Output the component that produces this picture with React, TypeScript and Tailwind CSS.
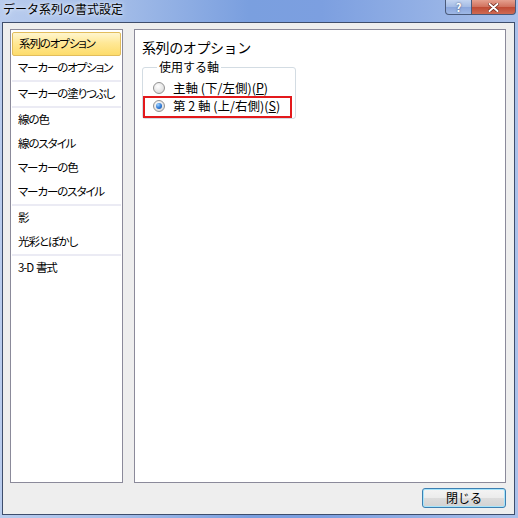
import React from "react";

const jp = "font-['Noto_Sans_CJK_JP','Noto_Sans',sans-serif]";

interface Item {
  label: string;
  selected?: boolean;
}

// groups are split by a thin band
const groups: Item[][] = [
  [{ label: "系列のオプション", selected: true }, { label: "マーカーのオプション" }],
  [{ label: "マーカーの塗りつぶし" }],
  [{ label: "線の色" }, { label: "線のスタイル" }, { label: "マーカーの色" }, { label: "マーカーのスタイル" }],
  [{ label: "影" }, { label: "光彩とぼかし" }],
  [{ label: "3-D\u00a0\u00a0書式" }],
];

function Radio({ checked }: { checked?: boolean }) {
  return (
    <span className="shrink-0 flex items-center justify-center w-[12px] h-[12px] rounded-full border border-[#929292] bg-[radial-gradient(circle_at_40%_35%,#ffffff_0%,#e4e4e4_60%,#cfcfcf_100%)]">
      {checked && (
        <span className="w-[6px] h-[6px] rounded-full bg-[radial-gradient(circle_at_35%_30%,#9fd3ff_0%,#2f79d6_55%,#164f9e_100%)]" />
      )}
    </span>
  );
}

export default function App() {
  return (
    <div
      className={`w-[518px] h-[518px] flex flex-col overflow-hidden bg-[linear-gradient(90deg,#b9ccee_0%,#a4bde8_22%,#7a9fdf_48%,#7c9fe0_62%,#97b3e6_85%,#aac1ea_100%)] ${jp}`}
    >
      {/* TITLE BAR */}
      <div className="h-[22px] flex items-start shrink-0">
        <div className="pl-[3px] pt-[1px] text-[12px] leading-[16px] text-black [text-shadow:0_0_6px_#e6eefb,0_0_3px_#e6eefb]">
          データ系列の書式設定
        </div>
        <div className="ml-auto mr-[2px] flex">
          <div className="w-[27px] h-[15px] rounded-bl-[4px] border border-t-0 border-[#4a5a7a] bg-[linear-gradient(180deg,#c3d4f1_0%,#a3bbe4_50%,#8aa6dc_51%,#9fb8e6_100%)] flex items-center justify-center text-white text-[11px] font-bold leading-[13px] [text-shadow:0_0_2px_#3a4a6a]">
            ?
          </div>
          <div className="w-[44px] h-[15px] rounded-br-[4px] border border-l-0 border-t-0 border-[#4a5a7a] bg-[linear-gradient(180deg,#e5a08f_0%,#d0705c_50%,#bf4a34_51%,#cf6a53_100%)] flex items-center justify-center">
            <svg width="11" height="9" viewBox="0 0 11 9">
              <path d="M1.5 1 L9.5 8 M9.5 1 L1.5 8" stroke="#6a2418" strokeWidth="3.4" strokeLinecap="round" />
              <path d="M1.5 1 L9.5 8 M9.5 1 L1.5 8" stroke="#ffffff" strokeWidth="2" strokeLinecap="round" />
            </svg>
          </div>
        </div>
      </div>

      {/* BODY */}
      <div className="flex-1 ml-[2px] mr-[3px] mb-[3px] border border-[#3e4d6c] bg-[#eeeeee] flex flex-col pt-[6px] pl-[7px] pr-[8px] pb-[5px]">
        <div className="h-[454px] flex gap-[11px]">
          {/* CATEGORY LIST */}
          <div className="w-[113px] bg-white border border-[#8b8a9a] pt-[2px] px-[1px]">
            {groups.map((g, gi) => (
              <div key={gi}>
                {gi > 0 && <div className="h-[2px] bg-[#ebebf4]" />}
                {g.map((it) => (
                  <div
                    key={it.label}
                    className={`h-[24px] flex items-center pl-[6px] text-[11.5px] tracking-[-1.1px] text-black whitespace-nowrap [font-feature-settings:'palt'] ${
                      it.selected
                        ? "rounded-[2px] border border-[#e2bd5c] bg-[linear-gradient(180deg,#fff6cf_0%,#ffe896_45%,#fddc6b_100%)]"
                        : ""
                    }`}
                  >
                    {it.label}
                  </div>
                ))}
              </div>
            ))}
          </div>

          {/* OPTIONS PANEL */}
          <div className="flex-1 bg-white border border-[#8b8a9a] pl-[7px] pt-[8px]">
            <div className="text-[14px] leading-[18px] text-black tracking-[-0.4px]">系列のオプション</div>

            <fieldset className="mt-[4px] w-[154px] border border-[#d3dce3] rounded-[3px] pl-[10px] pt-[5px] pb-[3px]">
              <legend className="ml-[4px] px-[2px] text-[12px] leading-[14px] text-black">使用する軸</legend>

              <div className="h-[18px] flex items-center gap-[8px] text-[12.5px] leading-[18px] text-black whitespace-nowrap">
                <Radio />
                <span>
                  主軸 (下/左側)(<span className="underline">P</span>)
                </span>
              </div>
              <div className="relative h-[18px] flex items-center gap-[8px] text-[12.5px] leading-[18px] text-black whitespace-nowrap">
                <Radio checked />
                <span>
                  第 2 軸 (上/右側)(<span className="underline">S</span>)
                </span>
                {/* red highlight */}
                <div className="absolute left-[-10px] top-[-1px] w-[149px] h-[22px] border-2 border-[#e3191c] pointer-events-none" />
              </div>
            </fieldset>
          </div>
        </div>

        {/* FOOTER */}
        <div className="mt-[5px] flex justify-end">
          <button className="w-[84px] h-[20px] rounded-[3px] border border-[#3c7fb1] shadow-[inset_0_0_0_1px_#a6e4fb] bg-[linear-gradient(180deg,#f4f4f4_0%,#ececec_48%,#dcdcdc_52%,#d2d2d2_100%)] text-[12px] leading-none text-black flex items-center justify-center">
            閉じる
          </button>
        </div>
      </div>
    </div>
  );
}
